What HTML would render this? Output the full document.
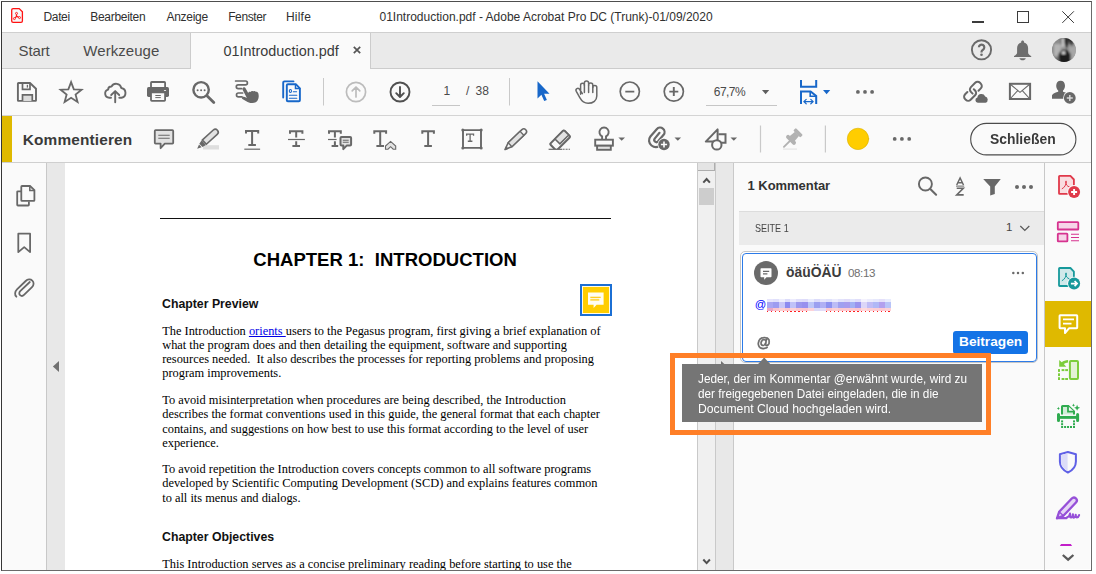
<!DOCTYPE html>
<html lang="de">
<head>
<meta charset="utf-8">
<title>01Introduction.pdf - Adobe Acrobat Pro DC</title>
<style>
*{box-sizing:border-box;margin:0;padding:0}
html,body{width:1096px;height:574px;overflow:hidden;background:#fff}
body{font-family:"Liberation Sans",sans-serif;color:#2c2c2c;position:relative}
.abs,.t{position:absolute}
.t{white-space:nowrap;line-height:1}
svg{position:absolute;overflow:visible}
#win{position:absolute;left:1px;top:1px;width:1091px;height:570px;border:1px solid #3c3c3c;border-color:#4e4e4e #6a6a6a #6a6a6a #363636;background:#fff}
/* regions (coordinates are page coordinates, everything is positioned on body) */
#menubar{left:2px;top:2px;width:1089px;height:30px;background:#fff}
#menuline{left:2px;top:32px;width:1089px;height:1px;background:#cfcfcf}
#tabbar{left:2px;top:33px;width:1089px;height:36px;background:#eaeaea}
#tabactive{left:190px;top:33px;width:181px;height:36px;background:#fafafa;border-left:1px solid #ccc;border-right:1px solid #ccc}
#tabline{left:2px;top:68px;width:188px;height:1px;background:#ccc}
#tabline2{left:371px;top:68px;width:720px;height:1px;background:#ccc}
#tb1{left:2px;top:69px;width:1089px;height:46px;background:#fafafa}
#tb1line{left:2px;top:115px;width:1089px;height:1px;background:#d4d4d4}
#tb2{left:2px;top:116px;width:1089px;height:46px;background:#fafafa}
#tb2strip{left:2px;top:116px;width:10px;height:46px;background:#dfb900}
#tb2line{left:2px;top:162px;width:1089px;height:1px;background:#cfcfcf}
#navpane{left:2px;top:163px;width:44px;height:407px;background:#fafafa}
#navline{left:46px;top:163px;width:1px;height:407px;background:#c8c8c8}
#lstrip{left:47px;top:163px;width:18px;height:407px;background:#e8e8e8}
#page{left:65px;top:163px;width:633px;height:407px;background:#fff}
#scroll{left:698px;top:163px;width:17px;height:407px;background:#f0f0f0}
#rstrip{left:715px;top:163px;width:18px;height:407px;background:#e8e8e8}
#cpanel{left:733px;top:163px;width:311px;height:406px;background:#fafafa}
#railline{left:1044px;top:163px;width:1px;height:407px;background:#c8c8c8}
#rail{left:1045px;top:163px;width:45px;height:406px;background:#fafafa}
</style>
</head>
<body>
<div id="win"></div>
<div class="abs" id="menubar"></div>
<div class="abs" id="menuline"></div>
<div class="abs" id="tabbar"></div>
<div class="abs" id="tabactive"></div>
<div class="abs" id="tabline"></div>
<div class="abs" id="tabline2"></div>
<div class="abs" id="tb1"></div>
<div class="abs" id="tb1line"></div>
<div class="abs" id="tb2"></div>
<div class="abs" id="tb2strip"></div>
<div class="abs" id="tb2line"></div>
<div class="abs" id="navpane"></div>
<div class="abs" id="navline"></div>
<div class="abs" id="lstrip"></div>
<div class="abs" id="page"></div>
<div class="abs" id="scroll"></div>
<div class="abs" id="rstrip"></div>
<div class="abs" id="cpanel"></div>
<div class="abs" id="railline"></div>
<div class="abs" id="rail"></div>
<svg style="left:0;top:0" width="1096" height="574" viewBox="0 0 1096 574" fill="none"><path d="M13.100 8.600H19.200L22.400 11.800V21a1.400 1.400 0 0 1-1.400 1.400H13.100a1.400 1.400 0 0 1-1.400-1.400V10a1.400 1.400 0 0 1 1.400-1.400z" fill="#f6f8f8" stroke="#ff1212" stroke-width="1.300"/><g stroke="#ff1212" stroke-width=".9"><circle cx="16.500" cy="13.400" r="1"/><circle cx="14.400" cy="18.600" r="1"/><circle cx="19.500" cy="17.600" r="1"/><path d="M16.500 14.400v2M16.500 16.400l-1.400 1.500M16.500 16.400l2.100 .8" stroke-width="1.300"/></g></svg>
<div class="t" style="left:43.50px;top:10.84px;font-size:12px;color:#303030;letter-spacing:-0.35px;">Datei</div>
<div class="t" style="left:90.30px;top:10.84px;font-size:12px;color:#303030;letter-spacing:-0.3px;">Bearbeiten</div>
<div class="t" style="left:166.50px;top:10.84px;font-size:12px;color:#303030;letter-spacing:-0.3px;">Anzeige</div>
<div class="t" style="left:228.20px;top:10.84px;font-size:12px;color:#303030;letter-spacing:-0.4px;">Fenster</div>
<div class="t" style="left:286.00px;top:10.84px;font-size:12px;color:#303030;letter-spacing:0.2px;">Hilfe</div>
<div class="t" style="left:379.50px;top:10.84px;font-size:12px;color:#303030;">01Introduction.pdf - Adobe Acrobat Pro DC (Trunk)-01/09/2020</div>
<div class="abs" style="left:972px;top:21px;width:12px;height:2px;background:#3c3c3c"></div>
<div class="abs" style="left:1017px;top:11px;width:12px;height:12px;border:1px solid #3c3c3c"></div>
<svg style="left:1062px;top:11px" width="12" height="12" viewBox="0 0 12 12"><path d="M.3 .3l11.600 11.600M11.900 .3L.3 11.900" stroke="#3c3c3c" stroke-width="1" fill="none"/></svg>

<div class="t" style="left:18.50px;top:43.00px;font-size:15px;color:#4a4a4a;letter-spacing:-0.1px;">Start</div>
<div class="t" style="left:83.30px;top:43.00px;font-size:15px;color:#4a4a4a;letter-spacing:0.05px;">Werkzeuge</div>
<div class="t" style="left:223.50px;top:43.51px;font-size:14.4px;color:#3a3a3a;">01Introduction.pdf</div>
<svg style="left:353px;top:46px" width="8" height="8" viewBox="0 0 8 8"><path d="M.8 .8l6.4 6.4M7.2 .8L.8 7.2" stroke="#555" stroke-width="1.7" fill="none"/></svg>
<svg style="left:0;top:0" width="1096" height="574" viewBox="0 0 1096 574" fill="none">
<circle cx="981.500" cy="49.800" r="9.600" stroke="#6a6a6a" stroke-width="1.900"/>
<path d="M978.900 47.300a2.700 2.700 0 1 1 4.100 2.400c-1 .6-1.500 1.100-1.500 2.200v.5" stroke="#6a6a6a" stroke-width="2.200"/><circle cx="981.500" cy="54.800" r="1.300" fill="#6a6a6a"/>
<path d="M1022.600 40.500c.8 0 1.400 .6 1.400 1.300v.6c2.600 .7 4.100 2.900 4.100 5.700v4.300c0 1.700 1.600 2.700 3.100 3.700v.9h-17.200v-.9c1.500-1 3.100-2 3.100-3.700v-4.300c0-2.800 1.500-5 4.100-5.700v-.6c0-.7 .6-1.300 1.400-1.300z" fill="#6e6e6e"/>
<path d="M1019.400 58.200h6.400c-.5 1.300-1.700 2.100-3.200 2.100s-2.700-.8-3.200-2.100z" fill="#6e6e6e"/>
<defs><clipPath id="av"><circle cx="1064" cy="50" r="11.900"/></clipPath><filter id="avb" x="-20%" y="-20%" width="140%" height="140%"><feGaussianBlur stdDeviation="1"/></filter></defs>
<g clip-path="url(#av)"><rect x="1050" y="36" width="28" height="28" fill="#919191"/>
<g filter="url(#avb)">
<rect x="1050" y="36" width="9" height="28" fill="#8a8a8a"/>
<rect x="1054" y="44" width="7" height="12" fill="#b4b4b4"/>
<rect x="1069" y="46" width="9" height="14" fill="#a6a6a6"/>
<path d="M1060 36h14l-2 11l-3-6l-2 8l-3-7l-3 4z" fill="#2e2e2e"/>
<rect x="1061.500" y="38" width="2.600" height="9" fill="#d0d0d0"/>
<path d="M1058.500 64V54l3-4h6l3 4v10z" fill="#1c1c1c"/>
<rect x="1061.800" y="51.500" width="3.400" height="2.600" fill="#e8e8e8"/>
<rect x="1050" y="58" width="9" height="6" fill="#6a6a6a"/>
</g></g>
</svg>

<svg style="left:0;top:0" width="1096" height="574" viewBox="0 0 1096 574" fill="none" stroke-linecap="round" stroke-linejoin="round">
<!-- save -->
<g stroke="#686868" stroke-width="1.9" stroke-linejoin="miter" stroke-linecap="butt">
<path d="M18.500 83H30l6 5.700V100.300a.6 .6 0 0 1-.6 .6H18.500a.6 .6 0 0 1-.6-.6V83.600a.6 .6 0 0 1 .6-.6z"/>
<path d="M22.500 83v6.300h7.500V83" stroke-width="1.700"/>
<path d="M27.400 84.800v2.800" stroke-width="1.300"/>
<path d="M22.500 101v-6.200h9.800v6.200" fill="#dcdcdc" stroke-width="1.700"/>
</g>
<!-- star -->
<polygon points="71.10,82.10 73.86,89.30 81.56,89.70 75.57,94.55 77.57,102.00 71.10,97.80 64.63,102.00 66.63,94.55 60.64,89.70 68.34,89.30" stroke="#686868" stroke-width="1.8" stroke-linejoin="miter"/>
<!-- cloud upload -->
<g stroke="#686868" stroke-width="1.900">
<path d="M111 97.800h-1.700a4.200 4.200 0 0 1-1.200-8.200a3.300 3.300 0 0 1 3.400-3.100a5.300 5.300 0 0 1 9.800 1.500a5 5 0 0 1 .3 9.800h-2.300"/>
<path d="M115.200 102.300V91.500M111.200 95l4-3.900l4 3.900"/>
</g>
<!-- printer -->
<rect x="151" y="82" width="14.100" height="6" rx=".8" stroke="#686868" stroke-width="1.800"/>
<rect x="147" y="87.100" width="22" height="9.800" rx="1.600" fill="#686868"/>
<rect x="151" y="92.300" width="14.100" height="8.600" rx=".8" fill="#fafafa" stroke="#686868" stroke-width="1.800"/>
<path d="M155.300 95.500h5.500M155.300 97.600h5.500" stroke="#686868" stroke-width="1" stroke-linecap="butt"/>
<rect x="163.900" y="90" width="2.200" height="1.100" rx=".5" fill="#e6e6e6"/>
<!-- search -->
<circle cx="201.100" cy="89.800" r="7.700" stroke="#686868" stroke-width="2.400"/>
<path d="M207.200 96l6.600 6.600" stroke="#686868" stroke-width="2.800"/>
<g fill="#686868"><circle cx="197.600" cy="90.200" r="1"/><circle cx="201.100" cy="90.200" r="1"/><circle cx="204.600" cy="90.200" r="1"/></g>
<!-- touch hand w/ squiggle -->
<g stroke="#686868" stroke-width="1.700">
<path d="M235.600 81h9.900a1.900 1.900 0 0 1 0 3.800h-7.300a1.900 1.900 0 0 0 0 3.800h3.300"/>
<path d="M242.600 93h-4.200a1.900 1.900 0 0 0 0 3.800h3.600"/>
</g>
<path d="M243.300 87.500c.9-.5 1.900-.1 2.400 .9l2.500 4.600c.3-1.200 1.500-1.600 2.400-1.100c.5-.9 1.700-1.100 2.600-.5c.7-.7 1.900-.5 2.600 .3c1.100-.3 2.200 .4 2.500 1.600c.7 2.600 .6 4.900-.6 6.900c-1.200 2-3.300 3-5.800 2.900c-2.200-.1-3.900-.8-5.600-1.900l-3.900-2.300c-.8-.5-.7-1.600 .1-1.900c1.100-.4 2.300-.2 3.500 .5l.9 .5l-4.300-8.200c-.5-.9-.2-1.900 .7-2.300z" fill="#686868"/>
<!-- blue pages -->
<g stroke="#1767c9" stroke-width="1.900" stroke-linejoin="round">
<path d="M293.500 81.400H284.500a1.300 1.300 0 0 0-1.300 1.300V97.600"/>
<path d="M287.900 84.200h7.900l4.100 4.100v11.900a1.100 1.100 0 0 1-1.100 1.100H287.900a1.100 1.100 0 0 1-1.100-1.100V85.300a1.100 1.100 0 0 1 1.100-1.100z" fill="#fafafa"/>
</g>
<path d="M295.500 84.400v4.100h4.200" stroke="#1767c9" stroke-width="1.500" stroke-linejoin="miter"/>
<g stroke="#1767c9" stroke-width="1.100"><ellipse cx="290.400" cy="91" rx="1.100" ry="1.500"/><path d="M293.300 91.800h3.300M289.400 95.300h7.400M289.400 98.200h7.400"/></g>
<!-- separators -->
<path d="M323.500 78v27.500M509.500 78v27.500" stroke="#c9c9c9" stroke-width="1" stroke-linecap="butt"/>
<!-- up (disabled) / down -->
<g stroke="#bcbcbc" stroke-width="1.700"><circle cx="356" cy="92" r="9.600"/><path d="M356 97V87.200M352.200 90.800l3.800-3.800l3.800 3.800"/></g>
<g stroke="#505050" stroke-width="1.900"><circle cx="400" cy="92" r="9.500"/><path d="M400 87v9.800M396.200 93.200l3.800 3.800l3.800-3.800"/></g>
<!-- page field underline, zoom underline -->
<path d="M432 105.500h28M706 105.500h71" stroke="#c6c6c6" stroke-width="1" stroke-linecap="butt"/>
<!-- cursor -->
<path d="M537.500 81.300v17.200l3.900-3.700l2.800 6.300l2.700-1.200l-2.800-6.200h5.400z" fill="#1767c9"/>
<!-- hand -->
<g stroke="#686868" stroke-width="1.500">
<path d="M580.600 94.200V85.200a1.900 1.900 0 0 1 3.800 0V83a2.100 2.100 0 0 1 4.200 0v2.200a2.100 2.100 0 0 1 4.200 0v2.300a2 2 0 0 1 4 0V96c0 4.400-3.600 7.300-8.700 7.300c-4 0-6.500-2.300-8.300-5.600l-3.500-6.300c-.6-1.200-.3-2.300 .6-2.800c1-.5 2.100-.2 2.800 .9l2.700 4.200"/>
<path d="M584.400 85.200v7.300M588.600 85.200v7.300M592.800 87.500v5"/>
</g>
<!-- minus / plus circles -->
<g stroke="#686868" stroke-width="1.700"><circle cx="629.800" cy="91.600" r="9.600"/><circle cx="673.800" cy="91.600" r="9.600"/></g>
<path d="M625.300 91.600h9M669.300 91.600h9M673.800 87.100v9" stroke="#686868" stroke-width="1.900" stroke-linecap="butt"/>
<!-- zoom dropdown tri -->
<path d="M762 90h7.200l-3.600 4.300z" fill="#5e5e5e"/>
<!-- fit width -->
<g stroke="#1767c9" stroke-width="2" stroke-linecap="butt" stroke-linejoin="miter">
<path d="M801 80v6.800h15.200V80"/>
<path d="M801 104V91.400h9.600l5.600 4.600V104"/>
<path d="M810.200 91.600v4.600h5.800" stroke-width="1.600"/>
</g>
<path d="M804 101.600h9M806.200 99.400l-2.400 2.200l2.400 2.200M810.800 99.400l2.400 2.200l-2.400 2.200" stroke="#1767c9" stroke-width="1.200"/>
<path d="M823 90h7.200l-3.600 4.200z" fill="#1767c9"/>
<!-- more dots -->
<g fill="#686868"><circle cx="857.900" cy="91.900" r="1.900"/><circle cx="865" cy="91.900" r="1.900"/><circle cx="872.100" cy="91.900" r="1.900"/></g>
<!-- link + cloud -->
<g stroke="#686868" stroke-width="2">
<path d="M972.600 93.600l-1.700-1.700a3.400 3.400 0 0 1 0-4.800l4.300-4.300a3.400 3.400 0 0 1 4.800 0l.8 .8a3.400 3.400 0 0 1 0 4.800l-2.300 2.300"/>
<path d="M973.800 89.200l1.300 1.300a3.400 3.400 0 0 1 0 4.800l-4.500 4.500a3.400 3.400 0 0 1-4.800 0l-.7-.7a3.400 3.400 0 0 1 0-4.800l2.300-2.300"/>
</g>
<path d="M977.800 102.800a2.700 2.700 0 0 1-.4-5.300a4.100 4.100 0 0 1 7.800-1a3.300 3.300 0 0 1 .4 6.300z" fill="#686868"/>
<!-- mail -->
<g stroke="#686868" stroke-linejoin="miter" stroke-linecap="butt"><rect x="1009.900" y="83.800" width="20.200" height="15.200" stroke-width="2"/>
<path d="M1010 84l10 8.300l10-8.300M1010 99l7.700-8.400M1030 99l-7.700-8.400" stroke-width="1.100"/></g>
<!-- person plus -->
<path d="M1060.600 80.800c2.700 0 4.400 2 4.400 4.900c0 2.100-.9 3.900-2 4.900v1.200c2 .6 5.200 1.700 6 3.400v3.500h-17v-3.500c.8-1.700 4.100-2.800 6.200-3.400v-1.200c-1.100-1-2-2.800-2-4.900c0-2.900 1.700-4.900 4.400-4.900z" fill="#686868"/>
<circle cx="1069.800" cy="97.900" r="6.700" fill="#fafafa"/>
<circle cx="1069.800" cy="97.900" r="5.900" fill="#686868"/>
<path d="M1066.800 97.900h6M1069.800 94.900v6" stroke="#d8d8d8" stroke-width="1.500" stroke-linecap="butt"/>
</svg>
<div class="t" style="left:443.60px;top:85.44px;font-size:12px;color:#4a4a4a;">1</div>
<div class="t" style="left:466.00px;top:85.44px;font-size:12px;color:#4a4a4a;">/</div>
<div class="t" style="left:475.50px;top:85.44px;font-size:12px;color:#4a4a4a;">38</div>
<div class="t" style="left:713.80px;top:85.54px;font-size:12px;color:#4a4a4a;letter-spacing:-0.55px;">67,7%</div>

<svg style="left:0;top:0" width="1096" height="574" viewBox="0 0 1096 574" fill="none" stroke-linecap="round" stroke-linejoin="round">
<!-- note bubble -->
<path d="M155.600 130.200h16.800a.8 .8 0 0 1 .8 .8v11.800a.8 .8 0 0 1-.8 .8h-7.600l-4.200 4.600v-4.600h-5a.8 .8 0 0 1-.8-.8V131a.8 .8 0 0 1 .8-.8z" fill="#e2e2e2" stroke="#686868" stroke-width="1.800"/>
<path d="M158.300 135.200h11.400M158.300 138.200h11.400" stroke="#686868" stroke-width="1.100" stroke-linecap="butt"/>
<!-- highlighter -->
<rect x="203" y="145.200" width="16" height="4.300" fill="#dedede"/>
<g transform="translate(197.200,148.700) rotate(-42.500)">
<path d="M0 0L4.200-1.900V1.900z" fill="#686868"/>
<path d="M5-2.300L9-3.200V3.200L5 2.300z" fill="#686868"/>
<path d="M9.800-2.900H24.500a2.900 2.900 0 0 1 0 5.800H9.800z" fill="#e2e2e2" stroke="#686868" stroke-width="1.600" stroke-linejoin="miter"/>
</g>
<!-- T underline -->
<path d="M246.00 133.60V131.00H258.20V133.60M252.10 131.00V145.00M248.30 145.00H255.90" stroke="#686868" stroke-width="2" stroke-linecap="butt" stroke-linejoin="miter"/>
<path d="M244.300 149.200h15.800" stroke="#686868" stroke-width="1.200" stroke-linecap="butt"/>
<!-- T strike -->
<path d="M290.00 133.80V131.20H302.40V133.80M296.20 131.20V137.60M296.20 141.30V145.90M292.40 145.90H300.00" stroke="#686868" stroke-width="2" stroke-linecap="butt" stroke-linejoin="miter"/>
<path d="M288 139.500h16.900" stroke="#686868" stroke-width="1.200" stroke-linecap="butt"/>
<!-- T replace bubble -->
<path d="M329.00 133.80V131.20H340.80V133.80M334.90 131.20V137.60M334.90 141.30V145.90M331.60 145.90H338.20" stroke="#686868" stroke-width="2" stroke-linecap="butt" stroke-linejoin="miter"/>
<path d="M328 139.500h8.600" stroke="#686868" stroke-width="1.200" stroke-linecap="butt"/>
<path d="M341.500 137h8.600a1 1 0 0 1 1 1v6.600a1 1 0 0 1-1 1h-3.400l-3.400 3.500v-3.500h-1.800a1 1 0 0 1-1-1V138a1 1 0 0 1 1-1z" fill="#e2e2e2" stroke="#686868" stroke-width="2"/>
<path d="M342.800 140.200h5.900M342.800 142.300h5.900" stroke="#686868" stroke-width="1.100" stroke-linecap="butt"/>
<!-- T insert caret -->
<path d="M374.30 133.80V131.20H386.10V133.80M380.20 131.20V145.90M376.40 145.90H384.00" stroke="#686868" stroke-width="2" stroke-linecap="butt" stroke-linejoin="miter"/>
<path d="M385.500 149.200v-3.100l5.100-4.700l5.100 4.700v3.100h-2.500l-2.600-2.500l-2.600 2.500z" fill="#e2e2e2" stroke="#686868" stroke-width="1.100" stroke-linejoin="miter"/>
<!-- T plain -->
<path d="M422.30 133.80V131.20H433.90V133.80M428.10 131.20V145.90M424.30 145.90H431.90" stroke="#686868" stroke-width="2" stroke-linecap="butt" stroke-linejoin="miter"/>
<!-- text box -->
<rect x="463" y="130.100" width="18" height="17.800" fill="#fafafa" stroke="#686868" stroke-width="1.900"/>
<g fill="#686868"><circle cx="462.800" cy="129.900" r="1.500"/><circle cx="481.200" cy="129.900" r="1.500"/><circle cx="462.800" cy="148.100" r="1.500"/><circle cx="481.200" cy="148.100" r="1.500"/></g>
<path d="M466.65 135.65V134.15H473.55V135.65M470.10 134.15V141.25M467.80 141.25H472.40" stroke="#686868" stroke-width="1.3" stroke-linecap="butt" stroke-linejoin="miter"/>
<!-- pencil -->
<g transform="translate(505.100,149.400) rotate(-43.600)" stroke="#686868" stroke-width="1.600" stroke-linejoin="round">
<path d="M0 0L6.800-2.700H25.800a2.700 2.700 0 0 1 0 5.400H6.800z" fill="#fafafa"/>
<path d="M6.800-2.700H23.300V2.700H6.800z" fill="#e2e2e2" stroke-width="1.400"/>
<path d="M0 0L2.600-1V1z" fill="#686868" stroke-width=".8"/>
</g>
<!-- eraser -->
<clipPath id="erc"><rect x="540" y="120" width="40" height="29.300"/></clipPath>
<g clip-path="url(#erc)"><g transform="translate(560.100,140.400) rotate(-45)" stroke="#686868" stroke-linejoin="round">
<rect x="-9.900" y="-4.650" width="19.800" height="9.300" rx="1.400" fill="#fafafa" stroke-width="2.100"/>
<path d="M-2.600-4.650H8.500a1.400 1.400 0 0 1 1.400 1.400V2.300H-2.600z" fill="#e2e2e2" stroke-width="1.500"/>
</g></g>
<path d="M548.600 149.300h13.500" stroke="#686868" stroke-width="1.200" stroke-linecap="butt"/>
<path d="M562.600 149.300h7.400" stroke="#686868" stroke-width="1.100" stroke-linecap="butt" stroke-dasharray="2 1"/>
<!-- stamp -->
<g stroke="#686868" stroke-width="1.900" stroke-linejoin="miter" stroke-linecap="butt">
<path d="M602.100 139.700v-3.400a4.600 4.600 0 1 1 3.900 0v3.400"/>
<rect x="595.200" y="139.700" width="17.700" height="6"/>
<rect x="597.100" y="145.700" width="13.700" height="4.100" fill="#e2e2e2"/>
</g>
<!-- drop tris -->
<g fill="#686868"><path d="M618.400 137.500h6.600l-3.300 3.300z"/><path d="M674.500 137.500h6.600l-3.300 3.300z"/><path d="M730.500 137.500h6.600l-3.300 3.300z"/></g>
<!-- paperclip plus -->
<path d="M659.300 146.300c-2.400 1.300-5.600 1-7.800-.8c-2.800-2.300-3.300-6.200-1.100-9l6.300-7.300c1.600-1.800 4.400-2.100 6.200-.6c1.900 1.500 2.200 4.200 .7 6.200l-5.500 6.500c-.8 .9-2.100 1.100-3 .4c-1-.8-1.100-2.100-.4-3.100l4.800-5.800" stroke="#686868" stroke-width="2.200"/>
<circle cx="664" cy="144.500" r="6.500" fill="#fafafa"/>
<circle cx="664" cy="144.500" r="5.700" fill="#686868"/>
<path d="M660.900 144.500h6.200M664 141.400v6.200" stroke="#fff" stroke-width="1.600" stroke-linecap="butt"/>
<!-- shapes -->
<g stroke="#686868" stroke-width="2" stroke-linejoin="miter" stroke-linecap="butt">
<path d="M717.600 141.600H705.800l11.800-12.200z" stroke-linejoin="round"/>
<path d="M718.500 134.300h7v8.500h-4.500"/>
<circle cx="716.800" cy="144.900" r="4.700" fill="#fafafa"/>
</g>
<!-- separators -->
<path d="M760.500 125.400v27.200M825.400 125.400v27.200" stroke="#c9c9c9" stroke-width="1.200" stroke-linecap="butt"/>
<!-- pin disabled -->
<path d="M783 149.100h14" stroke="#e4e4e4" stroke-width="1.200" stroke-linecap="butt"/>
<g transform="translate(783.300,147.500) rotate(-45)" fill="#b2b2b2">
<rect x="0" y="-.95" width="10" height="1.900" rx=".9"/>
<rect x="8.900" y="-6.200" width="4" height="12.400" rx="2"/>
<path d="M12 -3.600L19.500 -2.900V2.900L12 3.600z"/>
<rect x="19" y="-5" width="3.700" height="10" rx="1.100"/>
</g>
<!-- colour dot -->
<circle cx="858" cy="138.900" r="10.700" fill="#ffcd00" stroke="#d9b000" stroke-width=".6"/>
<g fill="#686868"><circle cx="894.700" cy="138.900" r="1.900"/><circle cx="901.900" cy="138.900" r="1.900"/><circle cx="909.200" cy="138.900" r="1.900"/></g>
<!-- close button -->
<rect x="970.700" y="123.400" width="105.200" height="31.500" rx="15.750" fill="#fafafa" stroke="#4b4b4b" stroke-width="1.100"/>
</svg>
<div class="t" style="left:22.80px;top:131.96px;font-size:15.4px;color:#3a3a3a;font-weight:bold;letter-spacing:0.15px;">Kommentieren</div>
<div class="t" style="left:990.00px;top:131.03px;font-size:15.2px;color:#3a3a3a;font-weight:bold;transform:scaleX(.915);transform-origin:0 0;">Schließen</div>

<svg style="left:0;top:0" width="1096" height="574" viewBox="0 0 1096 574" fill="none" stroke-linecap="round" stroke-linejoin="round">
<g stroke="#686868" stroke-width="1.800" stroke-linejoin="miter" stroke-linecap="butt">
<path d="M21.200 191.300h-3.300a.7 .7 0 0 0-.7 .7v12.800a.7 .7 0 0 0 .7 .7h10.300a.7 .7 0 0 0 .7-.7v-3.300" stroke-linejoin="round"/>
<path d="M22 186h8l4.400 4.200v10a.7 .7 0 0 1-.7 .7H22a.7 .7 0 0 1-.7-.7V186.700a.7 .7 0 0 1 .7-.7z" fill="#fafafa"/>
<path d="M29.800 186.200v4.300h4.400" stroke-width="1.500"/>
<path d="M18.300 233.700h11.800v18.400l-5.900-5l-5.900 5z" stroke-linejoin="round"/>
</g>
<path d="M29.800 282.800l-9.600 9.200c-1.200 1.200-1.200 2.900-.1 3.900c1.100 1 2.800 .9 3.900-.2l8-7.700c2-2 2.100-4.900 .3-6.600c-1.800-1.700-4.700-1.500-6.600 .4l-8.700 8.400c-2.300 2.300-2.500 5.500-.6 7.300" stroke="#686868" stroke-width="1.800" transform="translate(0,-.8)"/>
<!-- strip arrows -->
<path d="M59 361v11l-6.100-5.500z" fill="#707070"/>
<path d="M721 361v11l6.100-5.500z" fill="#707070"/>
</svg>

<div class="abs" style="left:160px;top:217.6px;width:451px;height:1.3px;background:#111"></div>
<div class="t" style="left:253.30px;top:251.24px;font-size:18.5px;color:#000;font-weight:bold;letter-spacing:0.02px;">CHAPTER 1:&nbsp; INTRODUCTION</div>
<div class="t" style="left:162.00px;top:298.49px;font-size:12.3px;color:#111;font-weight:bold;">Chapter Preview</div>
<div class="t" style="left:162.20px;top:325.01px;font-size:12.4px;color:#000;font-family:'Liberation Serif',serif;">The Introduction <span style="color:#0000e6;text-decoration:underline">orients </span>users to the Pegasus program, first giving a brief explanation of</div>
<div class="t" style="left:162.20px;top:339.01px;font-size:12.4px;color:#000;font-family:'Liberation Serif',serif;">what the program does and then detailing the equipment, software and supporting</div>
<div class="t" style="left:162.20px;top:352.81px;font-size:12.4px;color:#000;font-family:'Liberation Serif',serif;">resources needed.&nbsp; It also describes the processes for reporting problems and proposing</div>
<div class="t" style="left:162.20px;top:367.01px;font-size:12.4px;color:#000;font-family:'Liberation Serif',serif;">program improvements.</div>
<div class="t" style="left:162.20px;top:393.81px;font-size:12.4px;color:#000;font-family:'Liberation Serif',serif;">To avoid misinterpretation when procedures are being described, the Introduction</div>
<div class="t" style="left:162.20px;top:407.92px;font-size:12.4px;color:#000;font-family:'Liberation Serif',serif;">describes the format conventions used in this guide, the general format that each chapter</div>
<div class="t" style="left:162.20px;top:422.51px;font-size:12.4px;color:#000;font-family:'Liberation Serif',serif;">contains, and suggestions on how best to use this format according to the level of user</div>
<div class="t" style="left:162.20px;top:436.81px;font-size:12.4px;color:#000;font-family:'Liberation Serif',serif;">experience.</div>
<div class="t" style="left:162.20px;top:462.81px;font-size:12.4px;color:#000;font-family:'Liberation Serif',serif;">To avoid repetition the Introduction covers concepts common to all software programs</div>
<div class="t" style="left:162.20px;top:477.42px;font-size:12.4px;color:#000;font-family:'Liberation Serif',serif;">developed by Scientific Computing Development (SCD) and explains features common</div>
<div class="t" style="left:162.20px;top:491.81px;font-size:12.4px;color:#000;font-family:'Liberation Serif',serif;">to all its menus and dialogs.</div>
<div class="t" style="left:162.00px;top:531.29px;font-size:12.3px;color:#111;font-weight:bold;">Chapter Objectives</div>
<div class="abs" style="left:65px;top:550px;width:633px;height:20px;overflow:hidden"><div class="t" style="left:97.20px;top:7.62px;font-size:12.4px;color:#000;font-family:'Liberation Serif',serif;">This Introduction serves as a concise preliminary reading before starting to use the</div>
</div>
<div class="abs" style="left:580px;top:284px;width:32px;height:32px;background:#ffcd00;border:2px solid #1b6fd4;box-shadow:inset 0 0 0 1px #fffbe6"></div>
<svg style="left:580px;top:284px" width="32" height="32" viewBox="0 0 32 32"><path d="M8 8.500h15.600v12.300H16.600l-3 3.300v-3.300H8z" fill="#fffdf2"/>
<path d="M10.300 13.300h10.400" stroke="#ffc400" stroke-width="1.100"/><path d="M10.300 15.800h9" stroke="#ffd84a" stroke-width="1.900"/></svg>

<div class="abs" style="left:697px;top:163px;width:1px;height:407px;background:#c9c9c9"></div>
<div class="abs" style="left:715px;top:163px;width:1px;height:407px;background:#c9c9c9"></div>
<div class="abs" style="left:733px;top:163px;width:1px;height:407px;background:#c9c9c9"></div>
<div class="abs" style="left:698px;top:163px;width:17px;height:8px;background:#e4e4e4;border-bottom:1px solid #adadad;border-right:1px solid #adadad"></div>
<div class="abs" style="left:699px;top:188px;width:15px;height:17px;background:#cdcdcd"></div>
<svg style="left:0;top:0" width="1096" height="574" viewBox="0 0 1096 574" fill="none">
<path d="M703.300 182.600l3.300-3.600l3.300 3.600" stroke="#505050" stroke-width="2" stroke-linejoin="miter"/>
<path d="M703.300 559.500l3.300 3.600l3.300-3.600" stroke="#505050" stroke-width="2" stroke-linejoin="miter"/>
</svg>

<div class="t" style="left:747.60px;top:179.00px;font-size:13px;color:#323232;font-weight:bold;letter-spacing:-0.05px;">1 Kommentar</div>
<svg style="left:0;top:0" width="1096" height="574" viewBox="0 0 1096 574" fill="none" stroke-linecap="round" stroke-linejoin="round">
<circle cx="925.400" cy="184" r="6.500" stroke="#686868" stroke-width="1.900"/>
<path d="M930.300 189l5.800 5.700" stroke="#686868" stroke-width="2.100"/>
<path d="M956.700 185l3.400-7l3.400 7M958 182.700h4.200" stroke="#686868" stroke-width="1.500" stroke-linecap="butt" stroke-linejoin="miter"/>
<path d="M956 186.100h8.200" stroke="#686868" stroke-width="1" stroke-linecap="butt"/>
<path d="M956.700 188.300h6.600l-6.600 6.600h7" stroke="#686868" stroke-width="1.600" stroke-linecap="butt" stroke-linejoin="miter"/>
<path d="M983.200 178.900h17.600l-6 7.600v7.400l-4.600 1.600v-9z" fill="#686868"/>
<g fill="#686868"><circle cx="1017" cy="186.900" r="2"/><circle cx="1024" cy="186.900" r="2"/><circle cx="1031" cy="186.900" r="2"/></g>
</svg>
<div class="abs" style="left:739px;top:211px;width:305px;height:34px;background:#ebebeb;border-top:1px solid #dcdcdc"></div>
<div class="t" style="left:754.50px;top:222.53px;font-size:11.3px;color:#444;transform:scaleX(.8);transform-origin:0 0;">SEITE 1</div>
<div class="t" style="left:1006.00px;top:222.37px;font-size:11.5px;color:#444;">1</div>
<svg style="left:0;top:0" width="1096" height="574" viewBox="0 0 1096 574" fill="none"><path d="M1020.300 226l4.500 4.400l4.500-4.400" stroke="#5a5a5a" stroke-width="1.300"/></svg>
<div class="abs" style="left:740px;top:251px;width:298px;height:112px;background:#fff;border:1px solid #c6c6c6;border-radius:5px"></div>
<div class="abs" style="left:741.5px;top:252.5px;width:295.5px;height:109.5px;border:1.500px solid #2c7be8;border-radius:4px"></div>
<svg style="left:0;top:0" width="1096" height="574" viewBox="0 0 1096 574" fill="none" stroke-linejoin="round">
<circle cx="766" cy="273" r="12" fill="#6a6a6a"/>
<path d="M761.200 268.300h9.600a.7 .7 0 0 1 .7 .7v7.500a.7 .7 0 0 1-.7 .7h-4.300l-2.300 2.500v-2.500h-3a.7 .7 0 0 1-.7-.7V269a.7 .7 0 0 1 .7-.7z" fill="#fff"/>
<path d="M763 271.300h6.200M763 273.900h4.400" stroke="#6a6a6a" stroke-width="1.200" stroke-linecap="butt"/>
<g fill="#6a6a6a"><circle cx="1013.300" cy="273" r="1.250"/><circle cx="1018" cy="273" r="1.250"/><circle cx="1022.800" cy="273" r="1.250"/></g>
</svg>
<div class="t" style="left:786.10px;top:265.93px;font-size:13.9px;color:#3c3c3c;font-weight:bold;">öäüÖÄÜ</div>
<div class="t" style="left:847.90px;top:267.08px;font-size:11.6px;color:#707070;letter-spacing:-0.35px;">08:13</div>
<div class="t" style="left:754.70px;top:299.03px;font-size:11.3px;color:#0000ff;">@</div>
<svg style="left:0;top:0" width="1096" height="574" viewBox="0 0 1096 574" shape-rendering="crispEdges"><rect x="766.80" y="299" width="5.96" height="2.800" fill="#e6e4fc"/><rect x="766.80" y="301.700" width="5.96" height="6" fill="#a9a6f2"/><rect x="766.80" y="307.600" width="5.96" height="3" fill="#e8a8c8"/><rect x="772.71" y="299" width="5.96" height="2.800" fill="#e0e0fb"/><rect x="772.71" y="301.700" width="5.96" height="6" fill="#9d9cf0"/><rect x="772.71" y="307.600" width="5.96" height="3" fill="#fbc4cc"/><rect x="778.62" y="299" width="5.96" height="2.800" fill="#eeeefd"/><rect x="778.62" y="301.700" width="5.96" height="6" fill="#c8c6f8"/><rect x="778.62" y="307.600" width="5.96" height="3" fill="#fcd0d4"/><rect x="784.53" y="299" width="5.96" height="2.800" fill="#dcdcfa"/><rect x="784.53" y="301.700" width="5.96" height="6" fill="#8c8af0"/><rect x="784.53" y="307.600" width="5.96" height="3" fill="#fcc6cc"/><rect x="790.44" y="299" width="5.96" height="2.800" fill="#ecebfd"/><rect x="790.44" y="301.700" width="5.96" height="6" fill="#c0c2f8"/><rect x="790.44" y="307.600" width="5.96" height="3" fill="#fcd2d6"/><rect x="796.35" y="299" width="5.96" height="2.800" fill="#e0dffa"/><rect x="796.35" y="301.700" width="5.96" height="6" fill="#9c98ee"/><rect x="796.35" y="307.600" width="5.96" height="3" fill="#fcc8ce"/><rect x="802.26" y="299" width="5.96" height="2.800" fill="#dedcfa"/><rect x="802.26" y="301.700" width="5.96" height="6" fill="#9890ee"/><rect x="802.26" y="307.600" width="5.96" height="3" fill="#fcc6ce"/><rect x="808.17" y="299" width="5.96" height="2.800" fill="#e9ecfd"/><rect x="808.17" y="301.700" width="5.96" height="6" fill="#bcc6f8"/><rect x="808.17" y="307.600" width="5.96" height="3" fill="#fcd2d8"/><rect x="814.08" y="299" width="5.96" height="2.800" fill="#dcdcfa"/><rect x="814.08" y="301.700" width="5.96" height="6" fill="#9ba0f0"/><rect x="814.08" y="307.600" width="5.96" height="3" fill="#dcdaf8"/><rect x="819.99" y="299" width="5.96" height="2.800" fill="#e6e6fc"/><rect x="819.99" y="301.700" width="5.96" height="6" fill="#b0b0f4"/><rect x="819.99" y="307.600" width="5.96" height="3" fill="#e2dcf8"/><rect x="825.90" y="299" width="5.96" height="2.800" fill="#e0e2fb"/><rect x="825.90" y="301.700" width="5.96" height="6" fill="#8e92f0"/><rect x="825.90" y="307.600" width="5.96" height="3" fill="#fcc6cc"/><rect x="831.80" y="299" width="5.96" height="2.800" fill="#ebebfc"/><rect x="831.80" y="301.700" width="5.96" height="6" fill="#bcbcf6"/><rect x="831.80" y="307.600" width="5.96" height="3" fill="#fcd0d4"/><rect x="837.71" y="299" width="5.96" height="2.800" fill="#e2e2fb"/><rect x="837.71" y="301.700" width="5.96" height="6" fill="#a0a0f0"/><rect x="837.71" y="307.600" width="5.96" height="3" fill="#fcc8ce"/><rect x="843.62" y="299" width="5.96" height="2.800" fill="#e0dcf9"/><rect x="843.62" y="301.700" width="5.96" height="6" fill="#a79cee"/><rect x="843.62" y="307.600" width="5.96" height="3" fill="#fcc8d0"/><rect x="849.53" y="299" width="5.96" height="2.800" fill="#e2e6fc"/><rect x="849.53" y="301.700" width="5.96" height="6" fill="#a2b0f4"/><rect x="849.53" y="307.600" width="5.96" height="3" fill="#fccad0"/><rect x="855.44" y="299" width="5.96" height="2.800" fill="#e0defa"/><rect x="855.44" y="301.700" width="5.96" height="6" fill="#9a94ee"/><rect x="855.44" y="307.600" width="5.96" height="3" fill="#fcc6ce"/><rect x="861.35" y="299" width="5.96" height="2.800" fill="#f4f2fd"/><rect x="861.35" y="301.700" width="5.96" height="6" fill="#dcd6f8"/><rect x="861.35" y="307.600" width="5.96" height="3" fill="#fdd8dc"/><rect x="867.26" y="299" width="5.96" height="2.800" fill="#ececfc"/><rect x="867.26" y="301.700" width="5.96" height="6" fill="#c0bcf6"/><rect x="867.26" y="307.600" width="5.96" height="3" fill="#fcd0d6"/><rect x="873.17" y="299" width="5.96" height="2.800" fill="#e6e8fc"/><rect x="873.17" y="301.700" width="5.96" height="6" fill="#b0b8f6"/><rect x="873.17" y="307.600" width="5.96" height="3" fill="#fccdd4"/><rect x="879.08" y="299" width="5.96" height="2.800" fill="#e4e0fa"/><rect x="879.08" y="301.700" width="5.96" height="6" fill="#b2a0ee"/><rect x="879.08" y="307.600" width="5.96" height="3" fill="#fccad2"/><rect x="884.99" y="299" width="5.96" height="2.800" fill="#e8ecfd"/><rect x="884.99" y="301.700" width="5.96" height="6" fill="#b8c4f8"/><rect x="884.99" y="307.600" width="5.96" height="3" fill="#fcd0d6"/><path d="M767 311.500h42.500M826 311.500h65" stroke="#ff2020" stroke-width="1.200" stroke-dasharray="1.300 2.600" fill="none"/></svg>
<div class="t" style="left:756.80px;top:334.28px;font-size:15.5px;color:#6a6a6a;font-weight:bold;transform:scaleX(.9);transform-origin:0 0;-webkit-text-stroke:.6px #6a6a6a;">@</div>
<div class="abs" style="left:953.3px;top:331.2px;width:74.6px;height:22.6px;background:#1473e6;border-radius:3px"></div>
<div class="t" style="left:959.00px;top:334.90px;font-size:13.7px;color:#fff;font-weight:bold;">Beitragen</div>

<div class="abs" style="left:1045px;top:301px;width:46px;height:46px;background:#dfb900"></div>
<svg style="left:0;top:0" width="1096" height="574" viewBox="0 0 1096 574" fill="none" stroke-linecap="round" stroke-linejoin="round">
<!-- create pdf -->
<path d="M1059.700 175.900h10.700l3.500 3.600v13.700a.7 .7 0 0 1-.7 .7h-13.500a.7 .7 0 0 1-.7-.7V176.600a.7 .7 0 0 1 .7-.7z" fill="#f9dde0" stroke="#e0394a" stroke-width="1.800"/>
<path d="M1062.200 188.700c2.400-1.200 3.900-3.900 4.200-7.100c.1-.9 -.8-.9-.8 0c.2 2.700 1.300 4.700 3.800 5.400" stroke="#e0394a" stroke-width="1"/>
<circle cx="1074.100" cy="192" r="6.900" fill="#fafafa"/>
<circle cx="1074.100" cy="192" r="6" fill="#e0394a"/>
<path d="M1071.100 192h6M1074.100 189v6" stroke="#fff" stroke-width="1.900" stroke-linecap="butt"/>
<!-- layout -->
<g stroke="#d6338f" stroke-width="1.800" fill="#f6d5e8" stroke-linejoin="miter">
<rect x="1057.800" y="222.200" width="20.500" height="7.300" rx=".6"/>
<rect x="1057.800" y="233.700" width="9.600" height="7.600" rx=".6"/>
</g>
<path d="M1071 234.300h8M1071 237.500h8M1071 240.700h8" stroke="#d6338f" stroke-width="1.100" stroke-linecap="butt"/>
<!-- export pdf -->
<path d="M1059.700 268h10.700l3.500 3.600v13.700a.7 .7 0 0 1-.7 .7h-13.500a.7 .7 0 0 1-.7-.7V268.700a.7 .7 0 0 1 .7-.7z" fill="#d0e9ea" stroke="#16999b" stroke-width="1.800"/>
<path d="M1062.200 280.600c2.400-1.200 3.900-3.900 4.200-7.100c.1-.9 -.8-.9-.8 0c.2 2.700 1.300 4.700 3.800 5.400" stroke="#16999b" stroke-width="1"/>
<circle cx="1074.100" cy="283.600" r="6.900" fill="#fafafa"/>
<circle cx="1074.100" cy="283.600" r="6" fill="#16999b"/>
<path d="M1070.900 283.600h5.800M1074.600 281l2.500 2.600l-2.500 2.600" stroke="#fff" stroke-width="1.700" stroke-linecap="butt" stroke-linejoin="miter"/>
<!-- comment (selected) -->
<path d="M1060.200 315.200h16.400a.6 .6 0 0 1 .6 .6v11.800a.6 .6 0 0 1-.6 .6h-7.400l-4.200 4.800v-4.800h-4.800a.6 .6 0 0 1-.6-.6V315.800a.6 .6 0 0 1 .6-.6z" stroke="#fff" stroke-width="2"/>
<path d="M1063 319.400h11M1063 323.600h8.500" stroke="#fff" stroke-width="1.900" stroke-linecap="butt"/>
<!-- organize -->
<rect x="1069.900" y="361" width="8.100" height="18" rx="1" fill="#e3f2d5" stroke="#7ccd3c" stroke-width="2"/>
<g fill="#7ccd3c"><rect x="1061.6" y="369.100" width="2.800" height="2"/><rect x="1061.6" y="378" width="2.800" height="2"/><rect x="1065.2" y="369.100" width="2.800" height="2"/><rect x="1065.2" y="378" width="2.800" height="2"/><rect x="1058" y="369.1" width="2" height="2.800"/><rect x="1058" y="373.3" width="2" height="2.800"/><rect x="1058" y="377.2" width="2" height="2.800"/></g>
<path d="M1059.200 366.800V360.100l2.500 2.100c1.800-1.400 3.900-2.200 6.400-2.300v2.700c-1.700 .1-3.100 .6-4.300 1.500l2.500 2.700z" fill="#7ccd3c"/>
<!-- print production -->
<path d="M1062 414.500V406.600a.6 .6 0 0 1 .6-.6h5.700l5.700 5.400v3.100" fill="#d2ecd8" stroke="#2fab4f" stroke-width="2" stroke-linejoin="miter" stroke-linecap="butt"/>
<path d="M1068 406v5.600h6" stroke="#2fab4f" stroke-width="1.800" fill="#fafafa" stroke-linejoin="miter"/>
<path d="M1058.500 414.400v6M1077.600 414.400v6" stroke="#2fab4f" stroke-width="3" stroke-linecap="round"/>
<path d="M1058 417.400h20" stroke="#2fab4f" stroke-width="2.900" stroke-linecap="butt"/>
<g fill="#2fab4f"><rect x="1061.100" y="420.4" width="2" height="2"/><rect x="1073" y="420.4" width="2" height="2"/><rect x="1061.100" y="423.2" width="2" height="2"/><rect x="1073" y="423.2" width="2" height="2"/><rect x="1061.1" y="426" width="2" height="2"/><rect x="1064.1" y="426" width="2" height="2"/><rect x="1067.05" y="426" width="2" height="2"/><rect x="1070" y="426" width="2" height="2"/><rect x="1073" y="426" width="2" height="2"/></g>
<g fill="#2fab4f"><path d="M1058.400 406.800l.5 1.100l1.100 .5l-1.100 .5l-.5 1.100l-.5-1.100l-1.100-.5l1.100-.5z"/><path d="M1073.500 403.600l.5 1.100l1.100 .5l-1.100 .5l-.5 1.100l-.5-1.100l-1.100-.5l1.100-.5z"/><path d="M1077.100 404.800l.9 2.100l2.100 .9l-2.100 .9l-.9 2.100l-.9-2.100l-2.100-.9l2.100-.9z"/></g>
<!-- protect -->
<path d="M1067.900 452l8 2.200v7.300c0 5-3.400 8.900-8 11c-4.600-2.100-8-6-8-11v-7.300z" stroke="#5f60e6" stroke-width="2" stroke-linejoin="round"/>
<path d="M1067.600 453.300l-6.500 1.800v6.400c0 4.200 2.700 7.600 6.500 9.600z" fill="#dcdcf8"/>
<!-- fill & sign -->
<g transform="translate(1057,518.300) rotate(-46.500)">
<path d="M0 0L6.200-2.900H24.500a2.900 2.900 0 0 1 0 5.800H6.200z" fill="#e6d6f6" stroke="#9650d8" stroke-width="2.300"/>
<path d="M6.200-2.900V2.900" stroke="#9650d8" stroke-width="1.300"/>
</g>
<path d="M1057 518.200h9.500" stroke="#9650d8" stroke-width="2.200"/>
<path d="M1067 517.200c1.600-.3 2.600-1.700 3-3.600c.2 1.800-.2 3.700 .9 3.900c1.300 .2 1.800-1.800 2-3.300c.1 1.700-.1 3.300 .9 3.400c1.200 .1 1.700-1.600 1.900-2.900c.2 1.500 .1 2.700 1.100 2.700c1.100 0 1.900-1 2.300-2.300" stroke="#9650d8" stroke-width="2.100"/>
<!-- scroll-more -->
<path d="M1059.800 546.100l1.300-2.100h9.700l1.300 2.100z" fill="#c21fc9"/>
<path d="M1062.800 555l5.300 4.700l5.300-4.700" stroke="#5a5a5a" stroke-width="2.300" stroke-linejoin="miter" stroke-linecap="butt"/>
</svg>

<svg style="left:0;top:0" width="1096" height="574" viewBox="0 0 1096 574"><path d="M757.700 364.500l6.500-7l6.500 7z" fill="#757575"/></svg>
<div class="abs" style="left:682px;top:364px;width:300px;height:58px;background:#757575"></div>
<div class="t" style="left:697.50px;top:372.40px;font-size:13px;color:#fff;transform:scaleX(.9076);transform-origin:0 0;">Jeder, der im Kommentar @erwähnt wurde, wird zu</div>
<div class="t" style="left:697.50px;top:387.20px;font-size:13px;color:#fff;transform:scaleX(.9043);transform-origin:0 0;">der freigegebenen Datei eingeladen, die in die</div>
<div class="t" style="left:697.50px;top:402.00px;font-size:13px;color:#fff;transform:scaleX(.9379);transform-origin:0 0;">Document Cloud hochgeladen wird.</div>
<div class="abs" style="left:670px;top:353px;width:321px;height:82px;border:5px solid #ff7f27"></div>

</body>
</html>
